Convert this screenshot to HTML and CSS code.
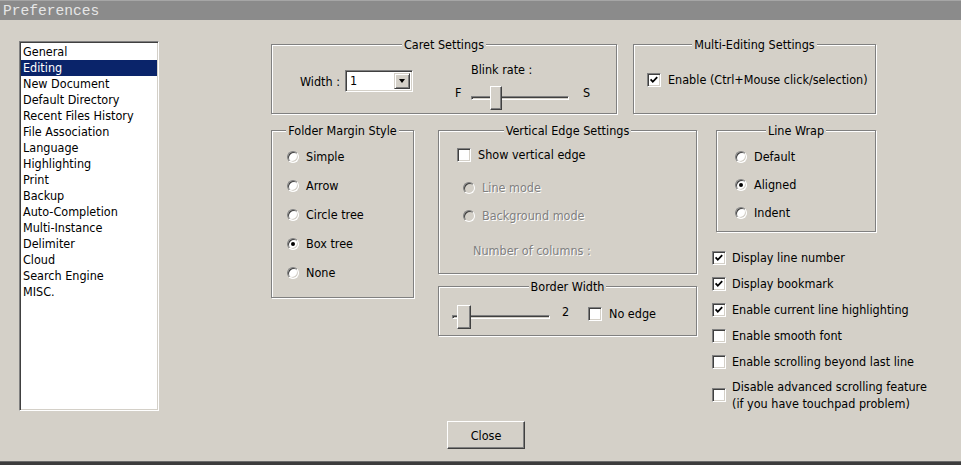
FILE: index.html
```html
<!DOCTYPE html>
<html>
<head>
<meta charset="utf-8">
<title>Preferences</title>
<link rel="stylesheet" href="styles.css">
</head>
<body>
<div class="window">
  <div class="titlebar"><span class="title">Preferences</span></div>
  <div class="main">
    <ul class="listbox">
      <li>General</li>
      <li class="selected">Editing</li>
      <li>New Document</li>
      <li>Default Directory</li>
      <li>Recent Files History</li>
      <li>File Association</li>
      <li>Language</li>
      <li>Highlighting</li>
      <li>Print</li>
      <li>Backup</li>
      <li>Auto-Completion</li>
      <li>Multi-Instance</li>
      <li>Delimiter</li>
      <li>Cloud</li>
      <li>Search Engine</li>
      <li>MISC.</li>
    </ul>
    <div class="panel">
      <div class="row row1">
        <div class="group caret">
          <div class="caption">Caret Settings</div>
          <div class="caret-body">
            <div class="width-field">
              <span>Width :</span>
              <div class="combo"><span class="combo-value">1</span><span class="combo-btn"><span class="tri"></span></span></div>
            </div>
            <div class="blink">
              <div class="blink-label">Blink rate :</div>
              <div class="blink-row">
                <span class="tick-label">F</span>
                <div class="slider blink-slider"><div class="track"></div><div class="thumb"></div></div>
                <span class="tick-label s-label">S</span>
              </div>
            </div>
          </div>
        </div>
        <div class="group multi">
          <div class="caption">Multi-Editing Settings</div>
          <div class="option multi-opt">
            <span class="cb"><svg viewBox="0 0 10 10" width="10" height="10"><polyline points="1.6,4.4 3.8,6.8 8.2,2.2" fill="none" stroke="#000" stroke-width="1.8"/></svg></span>
            <span>Enable (Ctrl+Mouse click/selection)</span>
          </div>
        </div>
      </div>
      <div class="row row2">
        <div class="group folder">
          <div class="caption">Folder Margin Style</div>
          <div class="radios folder-radios">
            <div class="option"><span class="radio"></span><span>Simple</span></div>
            <div class="option"><span class="radio"></span><span>Arrow</span></div>
            <div class="option"><span class="radio"></span><span>Circle tree</span></div>
            <div class="option"><span class="radio on"></span><span>Box tree</span></div>
            <div class="option"><span class="radio"></span><span>None</span></div>
          </div>
        </div>
        <div class="col mid">
          <div class="group vedge">
            <div class="caption">Vertical Edge Settings</div>
            <div class="option vedge-check"><span class="cb"></span><span>Show vertical edge</span></div>
            <div class="option disabled line-mode"><span class="radio off"></span><span>Line mode</span></div>
            <div class="option disabled bg-mode"><span class="radio off"></span><span>Background mode</span></div>
            <div class="disabled numcols">Number of columns :</div>
          </div>
          <div class="group bwidth">
            <div class="caption">Border Width</div>
            <div class="bwidth-row">
              <div class="slider bw-slider"><div class="track"></div><div class="thumb"></div></div>
              <span class="bw-value">2</span>
              <div class="option noedge"><span class="cb"></span><span>No edge</span></div>
            </div>
          </div>
        </div>
        <div class="col right">
          <div class="group wrap">
            <div class="caption">Line Wrap</div>
            <div class="radios wrap-radios">
              <div class="option"><span class="radio"></span><span>Default</span></div>
              <div class="option"><span class="radio on"></span><span>Aligned</span></div>
              <div class="option"><span class="radio"></span><span>Indent</span></div>
            </div>
          </div>
          <div class="checks">
            <div class="option"><span class="cb"><svg viewBox="0 0 10 10" width="10" height="10"><polyline points="1.6,4.4 3.8,6.8 8.2,2.2" fill="none" stroke="#000" stroke-width="1.8"/></svg></span><span>Display line number</span></div>
            <div class="option"><span class="cb"><svg viewBox="0 0 10 10" width="10" height="10"><polyline points="1.6,4.4 3.8,6.8 8.2,2.2" fill="none" stroke="#000" stroke-width="1.8"/></svg></span><span>Display bookmark</span></div>
            <div class="option"><span class="cb"><svg viewBox="0 0 10 10" width="10" height="10"><polyline points="1.6,4.4 3.8,6.8 8.2,2.2" fill="none" stroke="#000" stroke-width="1.8"/></svg></span><span>Enable current line highlighting</span></div>
            <div class="option"><span class="cb"></span><span>Enable smooth font</span></div>
            <div class="option"><span class="cb"></span><span>Enable scrolling beyond last line</span></div>
            <div class="option two-line"><span class="cb"></span><span>Disable advanced scrolling feature<br>(if you have touchpad problem)</span></div>
          </div>
        </div>
      </div>
      <div class="actions"><button class="btn">Close</button></div>
    </div>
  </div>
  <div class="statusbar"></div>
</div>
</body>
</html>
```

FILE: styles.css
```css
* { box-sizing: border-box; }
html, body { margin: 0; padding: 0; }
body {
  width: 961px;
  height: 465px;
  overflow: hidden;
  background: #d4d0c8;
  font-family: "DejaVu Sans Condensed", "DejaVu Sans", sans-serif;
  font-size: 12.5px;
  color: #000;
}
.window { display: flex; flex-direction: column; height: 465px; }

.titlebar {
  height: 20px;
  flex: none;
  background: #8b8b8b;
  border-top: 1px solid #a6a6a6;
  padding-left: 3px;
  display: flex;
  align-items: center;
}
.title {
  font-family: "Liberation Mono", monospace;
  font-size: 14.6px;
  line-height: 18px;
  color: #e6e6e6;
}

.main { flex: 1; display: flex; align-items: flex-start; padding-left: 19px; }

.listbox {
  list-style: none;
  margin: 21px 0 0;
  padding: 2px 1px 0 1px;
  width: 140px;
  height: 370px;
  flex: none;
  background: #fff;
  border: 1px solid;
  border-color: #808080 #fff #fff #808080;
  box-shadow: inset 1px 1px #404040, inset -1px -1px #d4d0c8;
}
.listbox li { height: 16px; line-height: 16px; padding-left: 2px; white-space: nowrap; }
.listbox li.selected { background: #0a246a; color: #fff; }

.panel { margin-left: 112px; margin-top: 24px; }
.row { display: flex; align-items: flex-start; }
.row2 { margin-top: 16px; }

.group {
  border: 1px solid #808080;
  box-shadow: inset 1px 1px #fff, 1px 1px #fff;
}
.caption {
  width: fit-content;
  margin: -7px auto 0;
  padding: 0 2px;
  background: #d4d0c8;
  line-height: 14px;
  white-space: nowrap;
}

.option { display: flex; align-items: center; gap: 7px; height: 14px; white-space: nowrap; line-height: 14px; }

.cb {
  width: 14px; height: 14px; flex: none;
  background: #fff;
  border: 1px solid;
  border-color: #808080 #fff #fff #808080;
  box-shadow: inset 1px 1px #404040, inset -1px -1px #d4d0c8;
  display: flex; align-items: center; justify-content: center;
}
.cb svg { display: block; }

.radio {
  width: 12px; height: 12px; flex: none;
  border-radius: 50%;
  background: #fff;
  border: 1px solid;
  border-color: #808080 #fff #fff #808080;
  box-shadow: inset 1px 1px #404040, inset -1px -1px #d4d0c8;
  display: flex; align-items: center; justify-content: center;
}
.radio.on::after { content: ""; width: 4px; height: 4px; border-radius: 50%; background: #000; }
.radio.off { background: #d4d0c8; }
.disabled { color: #808080; text-shadow: 1px 1px #fff; }

/* Caret settings */
.caret { width: 346px; height: 70px; }
.caret-body { display: flex; align-items: flex-start; }
.width-field {
  display: flex; align-items: center; justify-content: space-between;
  width: 113px; height: 22px;
  margin-left: 28px; margin-top: 18px;
}
.combo {
  width: 68px; height: 22px;
  background: #fff;
  border: 1px solid;
  border-color: #808080 #fff #fff #808080;
  box-shadow: inset 1px 1px #404040, inset -1px -1px #d4d0c8;
  display: flex; align-items: center;
  padding: 2px;
}
.combo-value { flex: 1; padding-left: 2px; line-height: 14px; }
.combo-btn {
  width: 16px; height: 16px;
  background: #d4d0c8;
  border: 1px solid;
  border-color: #d4d0c8 #404040 #404040 #d4d0c8;
  box-shadow: inset 1px 1px #fff, inset -1px -1px #808080;
  display: flex; align-items: center; justify-content: center;
}
.tri { width: 0; height: 0; border-left: 3.5px solid transparent; border-right: 3.5px solid transparent; border-top: 4px solid #000; }

.blink { margin-left: 42px; margin-top: 11px; }
.blink-label { padding-left: 16px; line-height: 14px; }
.blink-row { display: flex; align-items: flex-start; margin-top: 9px; }
.tick-label { width: 16px; line-height: 14px; }
.s-label { margin-left: 14px; }

.slider { position: relative; height: 24px; flex: none; }
.track {
  height: 4px;
  margin-top: 10px;
  background: #d4d0c8;
  border: 1px solid;
  border-color: #808080 #fff #fff #808080;
  box-shadow: inset 1px 1px #404040;
}
.thumb {
  position: absolute; top: 0;
  width: 12px; height: 24px;
  background: #d4d0c8;
  border: 1px solid;
  border-color: #fff #404040 #404040 #fff;
  box-shadow: inset -1px -1px #808080;
}
.blink-slider { width: 98px; }
.blink-slider .thumb { left: 19px; }

/* Multi editing */
.multi { width: 243px; height: 70px; margin-left: 16px; }
.multi-opt { margin-top: 21px; padding-left: 13px; }

/* Folder margin */
.folder { width: 143px; height: 168px; }
.radios { display: flex; flex-direction: column; }
.folder-radios { gap: 15px; margin-top: 12px; padding-left: 15px; }

.col { display: flex; flex-direction: column; }
.mid { margin-left: 24px; width: 259px; }
.vedge { height: 144px; }
.vedge-check { margin-top: 10px; padding-left: 18px; }
.line-mode { margin-top: 19px; padding-left: 24px; }
.bg-mode { margin-top: 14px; padding-left: 24px; }
.numcols { margin-top: 21px; padding-left: 34px; line-height: 14px; }

.bwidth { height: 50px; margin-top: 12px; }
.bwidth-row { display: flex; align-items: flex-start; margin-top: 11px; padding-left: 13px; }
.bw-slider { width: 98px; }
.bw-slider .thumb { left: 5px; width: 14px; }
.bw-value { width: 26px; margin-left: 12px; line-height: 14px; }
.noedge { margin-top: 2px; }

.right { margin-left: 14px; }
.wrap { width: 160px; height: 102px; margin-left: 5px; }
.wrap-radios { gap: 14px; margin-top: 12px; padding-left: 18px; }

.checks { display: flex; flex-direction: column; gap: 10px; margin-top: 18px; padding-left: 1px; }
.checks .option { height: 16px; gap: 6px; }
.checks .two-line { height: 34px; margin-top: -2px; line-height: 17px; }

.actions { margin-top: 9px; padding-left: 176px; }
.btn {
  width: 78px; height: 28px;
  font: inherit;
  color: #000;
  background: #d4d0c8;
  border: 1px solid;
  border-color: #fff #404040 #404040 #fff;
  box-shadow: inset -1px -1px #808080;
  padding: 0;
}

.statusbar { height: 4px; flex: none; background: #3c3c3c; border-top: 1px solid #6a6a6a; }
```
